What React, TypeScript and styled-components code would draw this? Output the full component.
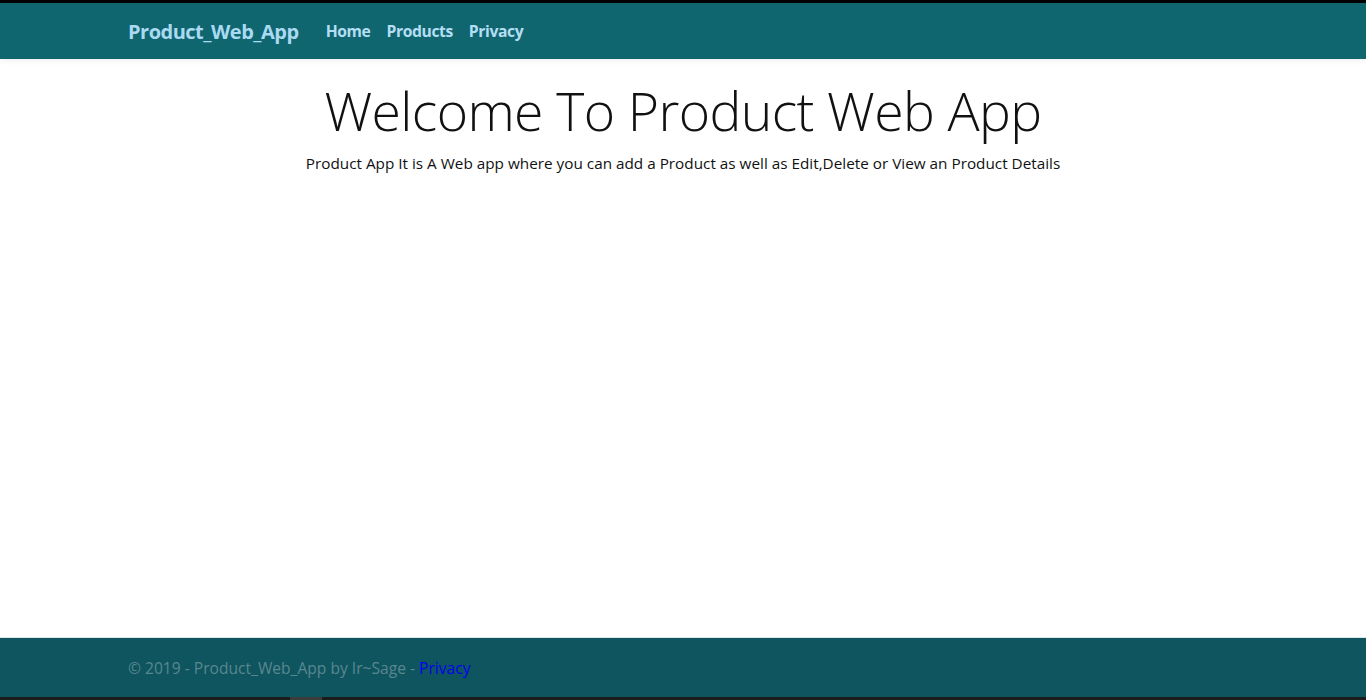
import React from "react";
import styled, { createGlobalStyle } from "styled-components";

const Global = createGlobalStyle`
  html, body { margin: 0; padding: 0; height: 100%; }
  body { font-family: "Open Sans", "Noto Sans", sans-serif; background: #fff; color: #212529; }
  #root { height: 100%; }
  * { box-sizing: border-box; }
`;

const Page = styled.div`
  display: flex;
  flex-direction: column;
  height: 700px;
`;

const Strip = styled.div<{ $color: string }>`
  height: 3px;
  flex: none;
  background: ${(p) => p.$color};
`;

const NavBar = styled.nav`
  flex: none;
  height: 56px;
  background: #10666f;
  box-shadow: 0 2px 6px rgba(0, 0, 0, 0.06);
  position: relative;
  z-index: 1;
`;

const Container = styled.div`
  width: 1140px;
  margin: 0 auto;
  padding: 0 15px;
  height: 100%;
  display: flex;
  align-items: center;
`;

const Brand = styled.a`
  font-size: 20px;
  font-weight: 700;
  color: #a9daf2;
  text-decoration: none;
  margin-right: 19px;
  letter-spacing: -0.5px;
`;

const NavLink = styled.a`
  font-size: 15.7px;
  font-weight: 700;
  color: #b4def3;
  text-decoration: none;
  padding: 0 8px;
  letter-spacing: -0.4px;
`;

const Main = styled.main`
  flex: 1;
  text-align: center;
  padding-top: 20px;
`;

const Title = styled.h1`
  margin: 0;
  font-size: 53.5px;
  font-weight: 300;
  line-height: 1.2;
  color: #111;
  letter-spacing: -0.6px;
`;

const Lead = styled.p`
  margin: 10px 0 0;
  font-size: 15.3px;
  color: #111;
`;

const Footer = styled.footer`
  flex: none;
  height: 60px;
  background: #0e5560;
  border-top: 1px solid #dbe7e9;
`;

const FooterText = styled.div`
  font-size: 15.6px;
  color: #5a878e;
  a { color: #0000ee; text-decoration: none; }
`;

const BottomBar = styled.div`
  height: 3px;
  flex: none;
  background: #1c1c1c;
  display: flex;
`;

const BottomMark = styled.span`
  margin-left: 290px;
  width: 32px;
  background: #3c3c3c;
`;

export default function App() {
  return (
    <Page>
      <Global />
      <Strip $color="#000" />
      <NavBar>
        <Container>
          <Brand href="#">Product_Web_App</Brand>
          <NavLink href="#">Home</NavLink>
          <NavLink href="#">Products</NavLink>
          <NavLink href="#">Privacy</NavLink>
        </Container>
      </NavBar>
      <Main>
        <Title>Welcome To Product Web App</Title>
        <Lead>
          Product App It is A Web app where you can add a Product as well as Edit,Delete or View an Product Details
        </Lead>
      </Main>
      <Footer>
        <Container>
          <FooterText>
            © 2019 - Product_Web_App by Ir~Sage - <a href="#">Privacy</a>
          </FooterText>
        </Container>
      </Footer>
      <BottomBar>
        <BottomMark />
      </BottomBar>
    </Page>
  );
}
